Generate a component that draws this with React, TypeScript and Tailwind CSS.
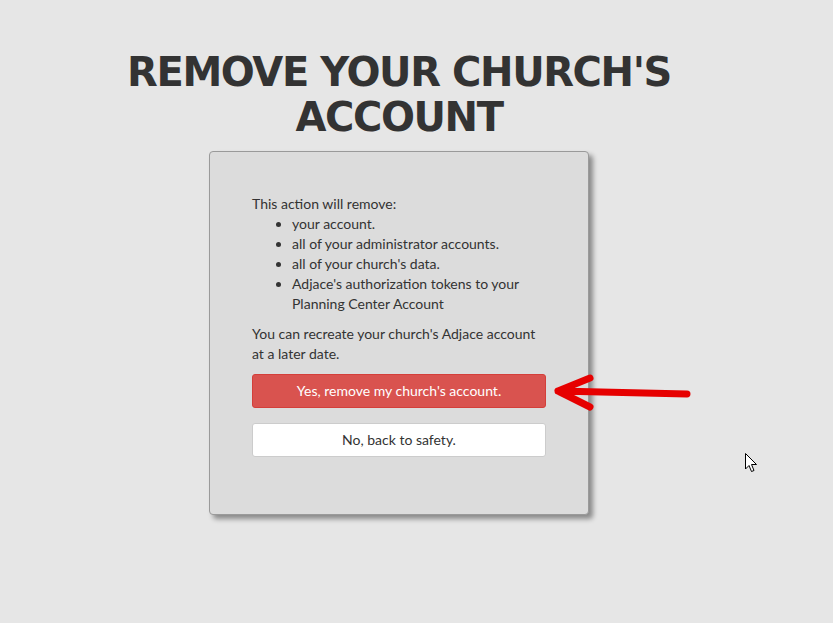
import React from 'react';

const App: React.FC = () => {
  return (
    <div className="min-h-[623px] w-full bg-[#e6e6e6] relative overflow-hidden">
      <div className="w-[798px] flex flex-col items-center pt-[50px]">
        {/* Title */}
        <h1 className="text-center font-bold uppercase text-[#333333] text-[40px] leading-[45px] tracking-[-1.4px] font-['DejaVu_Sans',sans-serif]">
          Remove your church's
          <br />
          account
        </h1>

        {/* Card */}
        <div className="mt-[11px] w-[380px] h-[364px] bg-[#dcdcdc] border border-[#9a9a9a] rounded-[4px] shadow-[4px_4px_5px_rgba(0,0,0,0.4)] px-[42px] pt-[42px] font-['Lato',sans-serif] text-[14px] leading-[20px] text-[#333333]">
          <p>This action will remove:</p>
          <ul className="list-disc pl-[40px]">
            <li>your account.</li>
            <li>all of your administrator accounts.</li>
            <li>all of your church's data.</li>
            <li>Adjace's authorization tokens to your Planning Center Account</li>
          </ul>
          <p className="mt-[10px]">
            You can recreate your church's Adjace account at a later date.
          </p>
          <button className="mt-[10px] w-full h-[34px] bg-[#d9534f] border border-[#d43f3a] rounded-[3px] text-white text-[14px]">
            Yes, remove my church's account.
          </button>
          <button className="mt-[15px] w-full h-[34px] bg-white border border-[#cccccc] rounded-[3px] text-[#333333] text-[14px]">
            No, back to safety.
          </button>
        </div>
      </div>

      {/* Annotation arrow */}
      <svg className="absolute left-[552px] top-[372px]" width="142" height="42" viewBox="0 0 142 42">
        <path
          d="M6 19 L135 22 M38 6 L6 19 L38 35"
          fill="none"
          stroke="#e60000"
          strokeWidth="7"
          strokeLinecap="round"
          strokeLinejoin="round"
        />
      </svg>

      {/* Mouse cursor */}
      <svg className="absolute left-[744px] top-[452px]" width="14" height="22" viewBox="0 0 14 22">
        <path
          d="M1.5 1.5 L1.5 17 L5 13.5 L7.5 19.5 L10 18.5 L7.5 12.5 L12.5 12.5 Z"
          fill="#ffffff"
          stroke="#000000"
          strokeWidth="1"
          strokeLinejoin="round"
        />
      </svg>
    </div>
  );
};

export default App;
